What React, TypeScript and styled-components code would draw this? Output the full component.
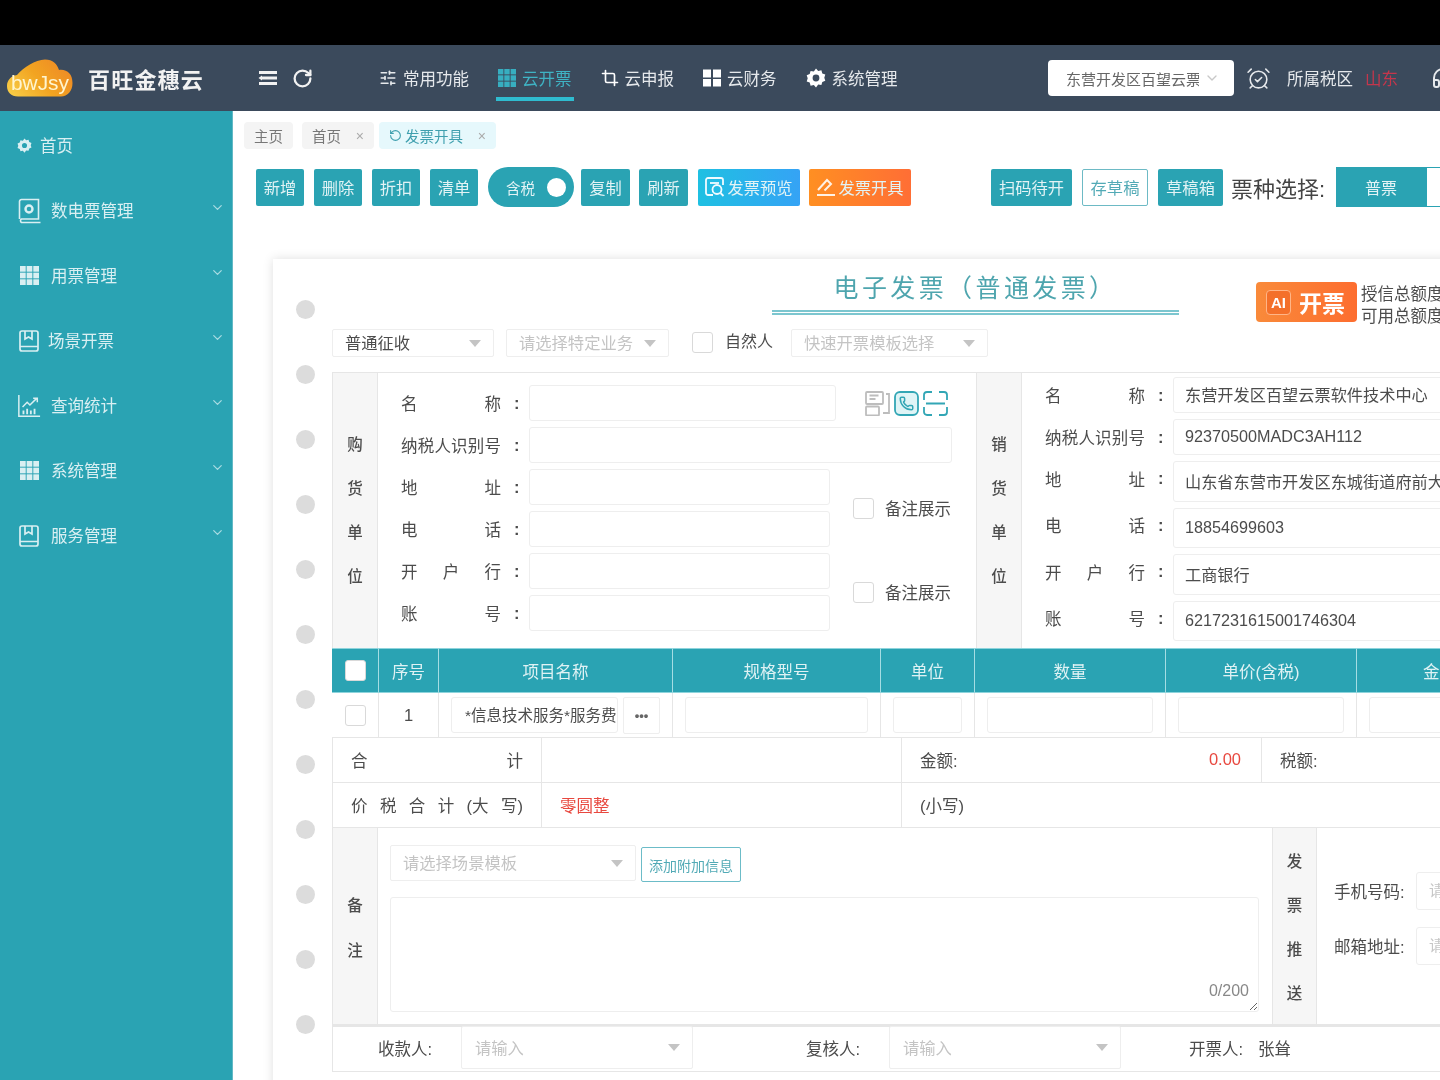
import styled, { createGlobalStyle } from "styled-components"
import { AlarmClockCheck, ChevronDown, Crop, Headphones, Phone, RotateCcw, RotateCw, SlidersHorizontal } from "lucide-react"

const teal = "#2aa3b3"
const line = "#e6e6e6"

const GlobalStyle = createGlobalStyle`
  html, body {
    margin: 0;
    height: 100%;
    overflow: hidden;
    background: #000;
  }
  * {
    box-sizing: border-box;
  }
  body, input, textarea {
    font-family: "Liberation Sans", "Noto Sans CJK SC", sans-serif;
  }
`

const Page = styled.div`
  width: 1440px;
  height: 1080px;
  padding-top: 45px;
  overflow: hidden;
  background: #000;
  filter: blur(0.35px);
`

const Header = styled.header`
  height: 66px;
  display: flex;
  align-items: center;
  background: #3b4a5c;
  color: #ececec;
  white-space: nowrap;
`
const LogoBox = styled.div`
  width: 88px;
  padding-left: 7px;
  display: flex;
  flex: none;
`
const Brand = styled.div`
  width: 170px;
  flex: none;
  font-size: 22px;
  font-weight: 700;
  letter-spacing: 1.2px;
  color: #f2f2f2;
`
const HeaderTool = styled.span`
  display: flex;
  margin-right: 14px;
  color: #f2f2f2;
`
const Nav = styled.nav`
  display: flex;
  margin-left: 50px;
  width: 671px;
  flex: none;
  height: 100%;
`
const NavItem = styled.div<{ $active?: boolean }>`
  height: 100%;
  margin-right: 25px;
  padding: 0 2px;
  display: flex;
  align-items: center;
  gap: 6px;
  font-size: 16.5px;
  color: ${(p) => (p.$active ? "#3fb3c4" : "#e6e9ec")};
  box-shadow: ${(p) => (p.$active ? "inset 0 -10px 0 #3b4a5c, inset 0 -14px 0 #2fbcd0" : "none")};
`
const CompanySelect = styled.div`
  width: 186px;
  height: 36px;
  flex: none;
  padding: 0 14px 0 18px;
  display: flex;
  align-items: center;
  justify-content: space-between;
  background: #fff;
  border-radius: 4px;
  color: #666;
  font-size: 15px;
`
const CompanyName = styled.span`
  width: 133px;
  overflow: hidden;
`
const TaxArea = styled.div`
  margin-left: 12px;
  display: flex;
  align-items: center;
  font-size: 16.5px;
  flex: none;
`
const TaxLabel = styled.span`
  margin-left: 16px;
  color: #e6e9ec;
`
const TaxValue = styled.span`
  margin-left: 12px;
  color: #c4364c;
`
const HeadsetSlot = styled.span`
  display: flex;
  margin-left: 33px;
  color: #e6e9ec;
`

const Body = styled.div`
  height: 969px;
  display: flex;
`
const Sidebar = styled.aside`
  width: 233px;
  flex: none;
  padding-top: 2px;
  background: ${teal};
  border-right: 1px solid #62b9c5;
  color: #d9eff2;
  font-size: 16.5px;
`
const SideItem = styled.div<{ $gap?: number }>`
  height: 65px;
  padding: 0 7px 0 17px;
  display: flex;
  align-items: center;
  gap: ${(p) => p.$gap ?? 10}px;
`
const SideIcon = styled.span`
  width: 24px;
  display: flex;
  justify-content: center;
  flex: none;
`
const SideText = styled.span`
  flex: 1;
  margin-top: -1px;
`
const SideChevron = styled.span`
  display: flex;
  margin-top: -7px;
  color: #a9dbe2;
`

const Main = styled.main`
  flex: 1;
  min-width: 0;
  overflow: hidden;
  background: #fff;
`
const Tabs = styled.div`
  height: 27px;
  margin: 11px 0 0 11px;
  display: flex;
  gap: 9px;
  font-size: 14.5px;
  white-space: nowrap;
`
const Tab = styled.div<{ $active?: boolean; $w: number }>`
  width: ${(p) => p.$w}px;
  margin-left: ${(p) => (p.$active ? -4 : 0)}px;
  display: flex;
  align-items: center;
  justify-content: space-between;
  padding: 0 10px;
  border-radius: 4px;
  background: ${(p) => (p.$active ? "#e6f8fc" : "#f4f4f4")};
  color: ${(p) => (p.$active ? "#3f9fae" : "#777")};
`
const TabClose = styled.span`
  color: #aaa;
  font-size: 14px;
`
const TabLabel = styled.span`
  display: flex;
  align-items: center;
  gap: 3px;
`
const Toolbar = styled.div`
  height: 40px;
  margin: 18px 0 0 23px;
  display: flex;
  align-items: center;
  gap: 10px;
  white-space: nowrap;
`
const Btn = styled.div<{ $w: number; $kind?: "blue" | "orange" | "line"; $gapLeft?: number }>`
  width: ${(p) => p.$w}px;
  height: 37px;
  flex: none;
  margin-left: ${(p) => p.$gapLeft ?? 0}px;
  display: flex;
  align-items: center;
  justify-content: center;
  gap: 2px;
  border-radius: 2px;
  font-size: 16.3px;
  color: ${(p) => (p.$kind === "line" ? "#52aab6" : "#e2f3f5")};
  border: ${(p) => (p.$kind === "line" ? "1px solid #6dbac5" : "none")};
  background: ${(p) =>
    p.$kind === "blue"
      ? "linear-gradient(90deg, #1fc0e2, #35a3f5)"
      : p.$kind === "orange"
        ? "linear-gradient(90deg, #ff8f22, #ff6e35)"
        : p.$kind === "line"
          ? "#fff"
          : teal};
`
const TaxToggle = styled.div`
  width: 86px;
  height: 40px;
  flex: none;
  padding: 0 7px 0 18px;
  display: flex;
  align-items: center;
  justify-content: space-between;
  border-radius: 20px;
  background: ${teal};
  color: #e2f3f5;
  font-size: 14.5px;
`
const ToggleKnob = styled.span`
  width: 19px;
  height: 19px;
  margin-right: 1px;
  border-radius: 50%;
  background: #fff;
`
const KindLabel = styled.span`
  margin-left: -2px;
  width: 95px;
  flex: none;
  font-size: 22px;
  color: #444;
`
const KindOn = styled.div`
  width: 90px;
  height: 40px;
  flex: none;
  display: flex;
  align-items: center;
  justify-content: center;
  background: ${teal};
  color: #e2f3f5;
  font-size: 16px;
`
const KindOff = styled.div`
  width: 90px;
  height: 40px;
  flex: none;
  margin-left: -10px;
  background: #fff;
  border: 1px solid ${teal};
`

const Sheet = styled.section`
  width: 1300px;
  margin: 52px 0 0 40px;
  padding-bottom: 40px;
  display: flex;
  background: #fff;
  box-shadow: 0 0 10px rgba(0, 0, 0, 0.13);
`
const Holes = styled.div`
  width: 59px;
  flex: none;
  padding: 41px 0 0 23px;
  display: flex;
  flex-direction: column;
  gap: 46px;
`
const Hole = styled.span`
  width: 19px;
  height: 19px;
  border-radius: 50%;
  background: #dcdcdc;
`
const Paper = styled.div`
  width: 1220px;
  flex: none;
  color: #4c4c4c;
  font-size: 16.5px;
`
const TitleRow = styled.div`
  height: 70px;
  display: flex;
`
const TitleBlock = styled.div`
  width: 407px;
  margin-left: 440px;
  flex: none;
`
const Title = styled.h1`
  margin: 6px 0 0;
  height: 45px;
  text-align: center;
  font-family: "Noto Sans CJK SC", sans-serif;
  font-size: 25px;
  line-height: 42px;
  font-weight: 400;
  letter-spacing: 3.4px;
  color: #4ea5ae;
`
const TitleRule = styled.div`
  height: 5px;
  border-top: 2px solid #7cc6cf;
  border-bottom: 2px solid #7cc6cf;
`
const AiButton = styled.div`
  width: 101px;
  height: 40px;
  margin: 23px 0 0 77px;
  flex: none;
  padding: 0 0 0 10px;
  display: flex;
  align-items: center;
  gap: 8px;
  border-radius: 4px;
  background: linear-gradient(90deg, #f98a3a, #fd6d2f);
  color: #fff;
  font-size: 23px;
  font-weight: 700;
`
const AiMark = styled.span`
  width: 25px;
  height: 25px;
  display: flex;
  align-items: center;
  justify-content: center;
  border-radius: 4px;
  border: 1px solid #ffb587;
  background: #f4702a;
  font-size: 15px;
  font-weight: 700;
`
const Credit = styled.div`
  margin: 24px 0 0 4px;
  font-size: 16.5px;
  line-height: 22px;
  color: #4c4c4c;
  white-space: nowrap;
`
const FilterRow = styled.div`
  height: 43px;
  display: flex;
  align-items: flex-start;
`
const Select = styled.div<{ $w: number; $h?: number; $muted?: boolean; $left?: number }>`
  width: ${(p) => p.$w}px;
  height: ${(p) => p.$h ?? 28}px;
  margin-left: ${(p) => p.$left ?? 0}px;
  flex: none;
  padding: 0 12px;
  display: flex;
  align-items: center;
  justify-content: space-between;
  border: 1px solid #eee;
  border-radius: 2px;
  background: #fff;
  font-size: 16.3px;
  line-height: 24px;
  color: ${(p) => (p.$muted ? "#c4c4c4" : "#4c4c4c")};
  &::after {
    content: "";
    border-style: solid;
    border-width: 7px 6px 0;
    border-color: #c4c4c4 transparent transparent;
  }
`
const Check = styled.span<{ $left?: number; $top?: number }>`
  width: 21px;
  height: 21px;
  margin-left: ${(p) => p.$left ?? 0}px;
  margin-top: ${(p) => p.$top ?? 0}px;
  flex: none;
  display: block;
  background: #fff;
  border: 1px solid #d9d9d9;
  border-radius: 3px;
`
const CheckText = styled.span`
  margin: 0 18px 0 12px;
  font-size: 16px;
  line-height: 26px;
`
const PartyBlock = styled.div`
  height: 276px;
  display: grid;
  grid-template-columns: 45px 598px 46px 1fr;
  border: 1px solid ${line};
  border-bottom: none;
`
const VerticalLabel = styled.div<{ $gap?: number; $divide?: boolean; $shift?: number }>`
  padding-top: ${(p) => p.$shift ?? 0}px;
  display: flex;
  flex-direction: column;
  align-items: center;
  justify-content: center;
  gap: ${(p) => p.$gap ?? 20}px;
  background: #f6f6f6;
  border-right: 1px solid ${line};
  border-left: ${(p) => (p.$divide ? `1px solid ${line}` : "none")};
  font-size: 15.5px;
  line-height: 24px;
  font-weight: 500;
`
const BuyerGrid = styled.div`
  padding-top: 12px;
  display: grid;
  grid-template-columns: 151px 301px 6px 116px;
  grid-auto-rows: 36px;
  row-gap: 6px;
`
const SellerGrid = styled.div`
  padding-top: 4px;
  display: grid;
  grid-template-columns: 151px 320px;
  grid-template-rows: 36px 36px 41px 40px 41px 40px;
  row-gap: 6px;
`
const FieldLabel = styled.div<{ $lift?: boolean }>`
  padding-left: 23px;
  display: flex;
  align-items: center;
  margin-bottom: ${(p) => (p.$lift ? 6 : 0)}px;
`
const LabelChars = styled.span`
  width: 100px;
  display: flex;
  justify-content: space-between;
`
const Colon = styled.span`
  margin-left: 13px;
  font-weight: 700;
`
const Input = styled.input<{ $span?: number }>`
  width: 100%;
  min-width: 0;
  grid-column: span ${(p) => p.$span ?? 1};
  padding: 0 11px 2px;
  border: 1px solid #eee;
  border-radius: 3px;
  outline: none;
  background: #fff;
  color: #4c4c4c;
  font-size: 16.2px;
  &::placeholder {
    color: #c6c6c6;
  }
`
const LookupIcons = styled.div`
  padding-left: 29px;
  display: flex;
  align-items: center;
  gap: 4px;
`
const NoteToggle = styled.div`
  grid-column: 3 / span 2;
  grid-row: span 2;
  margin-left: 23px;
  display: flex;
  align-items: center;
  gap: 11px;
  font-size: 16.5px;
  white-space: nowrap;
`
const Table = styled.div`
  display: grid;
  grid-template-columns: 47px 60px 234px 208px 94px 191px 191px 166px;
`
const HeadCell = styled.div`
  height: 45px;
  display: flex;
  align-items: center;
  justify-content: center;
  background: ${teal};
  border-top: 1px solid #8ed4dc;
  border-bottom: 1px solid #8ed4dc;
  border-right: 1px solid #a5dde3;
  color: #dff2f4;
  font-size: 16.5px;
  white-space: nowrap;
`
const Cell = styled.div`
  height: 45px;
  padding: 4px 12px;
  display: flex;
  align-items: center;
  justify-content: center;
  gap: 5px;
  border-right: 1px solid ${line};
  border-bottom: 1px solid ${line};
  &:first-child {
    border-left: 1px solid ${line};
  }
`
const CellInput = styled(Input)`
  height: 36px;
  flex: 1;
  font-size: 15.5px;
  padding: 0 0 2px 13px;
`
const MoreButton = styled.span`
  width: 37px;
  height: 37px;
  flex: none;
  display: flex;
  align-items: center;
  justify-content: center;
  border: 1px solid #eee;
  border-radius: 2px;
  font-weight: 700;
  color: #666;
  font-size: 13px;
`
const SumRow = styled.div<{ $cols: string }>`
  height: 45px;
  display: grid;
  grid-template-columns: ${(p) => p.$cols};
  border: 1px solid ${line};
  border-top: none;
  font-size: 16.5px;
`
const SumCell = styled.div<{ $spread?: boolean }>`
  padding: 0 18px 1px;
  display: flex;
  align-items: center;
  justify-content: ${(p) => (p.$spread ? "space-between" : "flex-start")};
  border-right: 1px solid ${line};
  color: #4c4c4c;
`
const Red = styled.span`
  color: #e8483f;
`
const Amount = styled(Red)`
  margin-right: 2px;
`
const RemarkBlock = styled.div`
  height: 197px;
  display: grid;
  grid-template-columns: 45px 894px 45px 1fr;
  border: 1px solid ${line};
  border-top: none;
`
const RemarkMain = styled.div`
  padding: 17px 12px 0 12px;
`
const RemarkTop = styled.div`
  display: flex;
  align-items: flex-start;
  gap: 5px;
`
const AttachButton = styled.div`
  width: 100px;
  height: 35px;
  margin-top: 2px;
  display: flex;
  align-items: center;
  justify-content: center;
  border: 1px solid #6cbcc8;
  border-radius: 2px;
  color: #52aab6;
  font-size: 14px;
`
const NoteArea = styled.div`
  position: relative;
  margin-top: 15px;
  height: 115px;
`
const NoteInput = styled.textarea`
  display: block;
  width: 869px;
  height: 115px;
  border: 1px solid #eee;
  border-radius: 3px;
  outline: none;
`
const Counter = styled.span`
  position: absolute;
  right: 11px;
  bottom: 12px;
  color: #888;
  font-size: 16px;
`
const PushForm = styled.div`
  padding: 44px 0 0 17px;
  display: flex;
  flex-direction: column;
  gap: 17px;
`
const PushRow = styled.div`
  display: flex;
  align-items: center;
  gap: 10px;
  font-size: 16.5px;
`
const PushLabel = styled.span`
  width: 72px;
  flex: none;
  white-space: nowrap;
`
const PushInput = styled(Input)`
  width: 300px;
  height: 38px;
  flex: none;
  font-size: 15px;
  padding-left: 12px;
`
const SignRow = styled.div`
  height: 47px;
  padding: 0 0 3px 45px;
  display: flex;
  align-items: center;
  border: 1px solid ${line};
  border-top: 2px solid ${line};
  font-size: 16.5px;
`
const SignLabel = styled.span<{ $left?: number; $w?: number }>`
  width: ${(p) => p.$w ?? 83}px;
  margin-left: ${(p) => p.$left ?? 0}px;
  flex: none;
`
const SignSelect = styled(Select)`
  padding-left: 13px;
`
const PhoneBadge = styled.span`
  position: relative;
  display: flex;
  & > svg:last-child {
    position: absolute;
    left: 5px;
    top: 5px;
  }
`

const MenuFold = () => (
  <svg width="20" height="20" viewBox="0 0 20 20" fill="#f2f2f2">
    <rect x="1" y="3" width="18" height="3" />
    <rect x="4" y="8.5" width="15" height="3" />
    <rect x="1" y="14" width="18" height="3" />
    <path d="M0.5 10 4 7.5v5z" />
  </svg>
)

const GridSquares = ({ size = 18, color = "currentColor" }: { size?: number; color?: string }) => (
  <svg width={size} height={size} viewBox="0 0 18 18" fill={color}>
    {[0, 6.3, 12.6].map((y) =>
      [0, 6.3, 12.6].map((x) => <rect key={`${x}-${y}`} x={x} y={y} width="5.4" height="5.4" />),
    )}
  </svg>
)

const FourSquares = () => (
  <svg width="18" height="18" viewBox="0 0 18 18" fill="#fff">
    <rect width="8" height="8" x="0" y="0.5" />
    <rect width="8" height="8" x="10" y="0.5" />
    <rect width="8" height="7.5" x="0" y="10" />
    <rect width="8" height="7.5" x="10" y="10" />
  </svg>
)

const Gear = ({ size = 20, color = "#fff" }: { size?: number; color?: string }) => (
  <svg width={size} height={size} viewBox="0 0 20 20">
    <path
      fill={color}
      fillRule="evenodd"
      d="M10 0.5l2.2 2.4 3.2-.6.9 3.1 3 1.2-1 3.1 1 3.1-3 1.2-.9 3.1-3.2-.6L10 19.5l-2.2-2.4-3.2.6-.9-3.1-3-1.2 1-3.1-1-3.1 3-1.2.9-3.1 3.2.6zM10 6.6a3.4 3.4 0 1 0 0 6.8 3.4 3.4 0 0 0 0-6.8z"
    />
  </svg>
)

const BookGear = () => (
  <svg width="24" height="26" viewBox="0 0 24 26" fill="none" stroke="#d9eff2" strokeWidth="1.6">
    <path d="M2.500 21V3.500a2 2 0 0 1 2-2h17v19.500H4.500a2 2 0 0 0 0 3.500H23.500" />
    <circle cx="12" cy="11" r="3.500" strokeWidth="2.400" />
  </svg>
)

const BookMark = () => (
  <svg width="22" height="24" viewBox="0 0 22 24" fill="none" stroke="#d9eff2" strokeWidth="1.7">
    <rect x="2" y="2" width="18" height="20" rx="2" />
    <path d="M2 17.500h18M7 2v8l3.500-2 3.500 2V2" />
  </svg>
)

const ChartIcon = () => (
  <svg width="26" height="26" viewBox="0 0 26 26" fill="none" stroke="#d9eff2" strokeWidth="1.6">
    <path d="M2 1v23h23" />
    <path d="M6 14l5-5 3 3 7-7M17.500 4.500H22V9" />
    <path d="M7 22v-4M11 22v-6M15 22v-4M19 22v-6" strokeWidth="2" />
  </svg>
)

const PreviewIcon = () => (
  <svg width="20" height="20" viewBox="0 0 20 20" fill="none" stroke="#f0fbff" strokeWidth="1.8">
    <path d="M8 18H3a2 2 0 0 1-2-2V3a2 2 0 0 1 2-2h13a2 2 0 0 1 2 2v5" />
    <path d="M5 6h9" />
    <circle cx="12" cy="12.500" r="4.500" />
    <path d="M15.500 16l3 3" />
  </svg>
)

const PenIcon = () => (
  <svg width="20" height="20" viewBox="0 0 20 20" fill="none" stroke="#fff1e4" strokeWidth="2">
    <path d="M2 13L11 3l4 4-6.500 6.500" />
    <path d="M1 18h18" />
  </svg>
)

const InvoiceLookup = () => (
  <svg width="25" height="25" viewBox="0 0 25 25" fill="none" stroke="#bdbdbd" strokeWidth="1.800">
    <rect x="1" y="1" width="17" height="12" rx="1" />
    <rect x="1" y="15.500" width="13" height="9" rx="1" />
    <path d="M4.500 4.500h9M4.500 8h6M21 3h3v19h-6" />
  </svg>
)

const PhoneLookup = () => (
  <svg width="25" height="25" viewBox="0 0 25 25" fill="none">
    <rect x="1" y="1" width="23" height="23" rx="5" stroke="#32a6b5" strokeWidth="1.800" fill="#dff4f6" />
  </svg>
)

const ScanLookup = () => (
  <svg width="25" height="25" viewBox="0 0 25 25" fill="none" stroke="#32a6b5" strokeWidth="1.800">
    <path d="M1 9V4a3 3 0 0 1 3-3h5M16 1h5a3 3 0 0 1 3 3v5M24 16v5a3 3 0 0 1-3 3h-5M9 24H4a3 3 0 0 1-3-3v-5M3 12.500h19" />
  </svg>
)

const Logo = () => (
  <svg width="66" height="38" viewBox="0 0 66 38">
    <defs>
      <linearGradient id="cloud" x1="0" y1="0.8" x2="1" y2="0.3">
        <stop offset="0" stopColor="#f7cb45" />
        <stop offset="0.5" stopColor="#f2a421" />
        <stop offset="1" stopColor="#ee8a25" />
      </linearGradient>
    </defs>
    <path
      fill="url(#cloud)"
      d="M11 37.500C4 37.500 0 33 0 27c0-6 4-10 10-11C17 8 28 1 38 0.500 46 0.500 50 5 52 11c8-1 13.500 4 13.500 13 0 8-5 13.500-11.500 13.500z"
    />
    <text
      x="4"
      y="31"
      fontSize="20"
      fontFamily="Liberation Sans, sans-serif"
      fill="#fff5cf"
      textLength="58"
      lengthAdjust="spacingAndGlyphs"
    >
      bwJsy
    </text>
  </svg>
)

const sideMenu = [
  { label: "数电票管理", icon: <BookGear /> },
  { label: "用票管理", icon: <GridSquares size={19} color="#d9eff2" /> },
  { label: "场景开票", icon: <BookMark />, gap: 7 },
  { label: "查询统计", icon: <ChartIcon /> },
  { label: "系统管理", icon: <GridSquares size={19} color="#d9eff2" /> },
  { label: "服务管理", icon: <BookMark /> },
]

const holes = Array.from({ length: 13 })

const Spread = ({ chars }: { chars: string[] }) => (
  <>
    <LabelChars>
      {chars.map((c, i) => (
        <span key={i}>{c}</span>
      ))}
    </LabelChars>
    <Colon>:</Colon>
  </>
)

const taxIdChars = ["纳", "税", "人", "识", "别", "号"]
const partyLabels = [["名", "称"], taxIdChars, ["地", "址"], ["电", "话"], ["开", "户", "行"], ["账", "号"]]

const sellerValues = [
  "东营开发区百望云票软件技术中心",
  "92370500MADC3AH112",
  "山东省东营市开发区东城街道府前大街",
  "18854699603",
  "工商银行",
  "6217231615001746304",
]

const headCols = ["序号", "项目名称", "规格型号", "单位", "数量", "单价(含税)", "金额"]

function FieldRow({ chars, value, lift }: { chars: string[]; value: string; lift: boolean }) {
  return (
    <>
      <FieldLabel $lift={lift}>
        <Spread chars={chars} />
      </FieldLabel>
      <Input readOnly defaultValue={value} />
    </>
  )
}

export default function App() {
  return (
    <Page>
      <GlobalStyle />
      <Header>
        <LogoBox>
          <Logo />
        </LogoBox>
        <Brand>百旺金穗云</Brand>
        <HeaderTool>
          <MenuFold />
        </HeaderTool>
        <HeaderTool>
          <RotateCw size={21} strokeWidth={2.6} />
        </HeaderTool>
        <Nav>
          <NavItem>
            <SlidersHorizontal size={18} strokeWidth={2.2} />
            常用功能
          </NavItem>
          <NavItem $active>
            <GridSquares size={18} color="#37aec0" />
            云开票
          </NavItem>
          <NavItem>
            <Crop size={18} strokeWidth={2.2} color="#fff" />
            云申报
          </NavItem>
          <NavItem>
            <FourSquares />
            云财务
          </NavItem>
          <NavItem>
            <Gear />
            系统管理
          </NavItem>
        </Nav>
        <CompanySelect>
          <CompanyName>东营开发区百望云票</CompanyName>
          <ChevronDown size={16} color="#c8c8c8" />
        </CompanySelect>
        <TaxArea>
          <AlarmClockCheck size={25} strokeWidth={1.5} color="#e6e9ec" />
          <TaxLabel>所属税区</TaxLabel>
          <TaxValue>山东</TaxValue>
          <HeadsetSlot>
            <Headphones size={24} strokeWidth={2} />
          </HeadsetSlot>
        </TaxArea>
      </Header>
      <Body>
        <Sidebar>
          <SideItem $gap={8}>
            <Gear size={15} color="#d9eff2" />
            <SideText>首页</SideText>
          </SideItem>
          {sideMenu.map((m) => (
            <SideItem key={m.label} $gap={m.gap}>
              <SideIcon>{m.icon}</SideIcon>
              <SideText>{m.label}</SideText>
              <SideChevron>
                <ChevronDown size={15} />
              </SideChevron>
            </SideItem>
          ))}
        </Sidebar>
        <Main>
          <Tabs>
            <Tab $w={49}>主页</Tab>
            <Tab $w={72}>
              首页
              <TabClose>×</TabClose>
            </Tab>
            <Tab $w={117} $active>
              <TabLabel>
                <RotateCcw size={13} />
                发票开具
              </TabLabel>
              <TabClose>×</TabClose>
            </Tab>
          </Tabs>
          <Toolbar>
            <Btn $w={48}>新增</Btn>
            <Btn $w={48}>删除</Btn>
            <Btn $w={48}>折扣</Btn>
            <Btn $w={48}>清单</Btn>
            <TaxToggle>
              含税
              <ToggleKnob />
            </TaxToggle>
            <Btn $w={49} $gapLeft={-3}>复制</Btn>
            <Btn $w={49} $gapLeft={-1}>刷新</Btn>
            <Btn $w={102} $kind="blue">
              <PreviewIcon />
              发票预览
            </Btn>
            <Btn $w={102} $kind="orange" $gapLeft={-1}>
              <PenIcon />
              发票开具
            </Btn>
            <Btn $w={81} $gapLeft={70}>扫码待开</Btn>
            <Btn $w={66} $kind="line">存草稿</Btn>
            <Btn $w={65}>草稿箱</Btn>
            <KindLabel>票种选择:</KindLabel>
            <KindOn>普票</KindOn>
            <KindOff />
          </Toolbar>
          <Sheet>
            <Holes>
              {holes.map((_, i) => (
                <Hole key={i} />
              ))}
            </Holes>
            <Paper>
              <TitleRow>
                <TitleBlock>
                  <Title>{"电子发票\uFF08普通发票\uFF09"}</Title>
                  <TitleRule />
                </TitleBlock>
                <AiButton>
                  <AiMark>AI</AiMark>
                  开票
                </AiButton>
                <Credit>
                  授信总额度
                  <br />
                  可用总额度
                </Credit>
              </TitleRow>
              <FilterRow>
                <Select $w={162}>普通征收</Select>
                <Select $w={163} $left={12} $muted>
                  请选择特定业务
                </Select>
                <Check $left={23} $top={3} />
                <CheckText>自然人</CheckText>
                <Select $w={197} $muted>
                  快速开票模板选择
                </Select>
              </FilterRow>
              <PartyBlock>
                <VerticalLabel>
                  <span>购</span>
                  <span>货</span>
                  <span>单</span>
                  <span>位</span>
                </VerticalLabel>
                <BuyerGrid>
                  <FieldLabel>
                    <Spread chars={partyLabels[0]} />
                  </FieldLabel>
                  <Input $span={2} />
                  <LookupIcons>
                    <InvoiceLookup />
                    <PhoneBadge>
                      <PhoneLookup />
                      <Phone size={15} color="#32a6b5" strokeWidth={2.4} />
                    </PhoneBadge>
                    <ScanLookup />
                  </LookupIcons>
                  <FieldLabel>
                    <Spread chars={taxIdChars} />
                  </FieldLabel>
                  <Input $span={3} />
                  <FieldLabel>
                    <Spread chars={partyLabels[2]} />
                  </FieldLabel>
                  <Input />
                  <NoteToggle>
                    <Check />
                    备注展示
                  </NoteToggle>
                  <FieldLabel>
                    <Spread chars={partyLabels[3]} />
                  </FieldLabel>
                  <Input />
                  <FieldLabel>
                    <Spread chars={partyLabels[4]} />
                  </FieldLabel>
                  <Input />
                  <NoteToggle>
                    <Check />
                    备注展示
                  </NoteToggle>
                  <FieldLabel>
                    <Spread chars={partyLabels[5]} />
                  </FieldLabel>
                  <Input />
                </BuyerGrid>
                <VerticalLabel $divide>
                  <span>销</span>
                  <span>货</span>
                  <span>单</span>
                  <span>位</span>
                </VerticalLabel>
                <SellerGrid>
                  {partyLabels.map((chars, i) => (
                    <FieldRow key={i} chars={chars} value={sellerValues[i]} lift={i > 1} />
                  ))}
                </SellerGrid>
              </PartyBlock>
              <Table>
                <HeadCell>
                  <Check />
                </HeadCell>
                {headCols.map((h) => (
                  <HeadCell key={h}>{h}</HeadCell>
                ))}
                <Cell>
                  <Check />
                </Cell>
                <Cell>1</Cell>
                <Cell>
                  <CellInput readOnly defaultValue="*信息技术服务*服务费" />
                  <MoreButton>•••</MoreButton>
                </Cell>
                <Cell>
                  <CellInput readOnly />
                </Cell>
                <Cell>
                  <CellInput readOnly />
                </Cell>
                <Cell>
                  <CellInput readOnly />
                </Cell>
                <Cell>
                  <CellInput readOnly />
                </Cell>
                <Cell>
                  <CellInput readOnly />
                </Cell>
              </Table>
              <SumRow $cols="209px 360px 360px 1fr">
                <SumCell $spread>
                  <span>合</span>
                  <span>计</span>
                </SumCell>
                <SumCell />
                <SumCell $spread>
                  <span>金额:</span>
                  <Amount>0.00</Amount>
                </SumCell>
                <SumCell>税额:</SumCell>
              </SumRow>
              <SumRow $cols="209px 360px 1fr">
                <SumCell $spread>
                  {["价", "税", "合", "计", "(大", "写)"].map((c) => (
                    <span key={c}>{c}</span>
                  ))}
                </SumCell>
                <SumCell>
                  <Red>零圆整</Red>
                </SumCell>
                <SumCell>(小写)</SumCell>
              </SumRow>
              <RemarkBlock>
                <VerticalLabel $gap={21} $shift={4}>
                  <span>备</span>
                  <span>注</span>
                </VerticalLabel>
                <RemarkMain>
                  <RemarkTop>
                    <Select $w={246} $h={36} $muted>
                      请选择场景模板
                    </Select>
                    <AttachButton>添加附加信息</AttachButton>
                  </RemarkTop>
                  <NoteArea>
                    <NoteInput />
                    <Counter>0/200</Counter>
                  </NoteArea>
                </RemarkMain>
                <VerticalLabel $divide $shift={4}>
                  <span>发</span>
                  <span>票</span>
                  <span>推</span>
                  <span>送</span>
                </VerticalLabel>
                <PushForm>
                  <PushRow>
                    <PushLabel>手机号码:</PushLabel>
                    <PushInput placeholder="请输入手机号码" />
                  </PushRow>
                  <PushRow>
                    <PushLabel>邮箱地址:</PushLabel>
                    <PushInput placeholder="请输入邮箱地址" />
                  </PushRow>
                </PushForm>
              </RemarkBlock>
              <SignRow>
                <SignLabel>收款人:</SignLabel>
                <SignSelect $w={232} $h={43} $muted>
                  请输入
                </SignSelect>
                <SignLabel $left={113}>复核人:</SignLabel>
                <SignSelect $w={232} $h={43} $muted>
                  请输入
                </SignSelect>
                <SignLabel $left={68} $w={69}>
                  开票人:
                </SignLabel>
                <span>张耸</span>
              </SignRow>
            </Paper>
          </Sheet>
        </Main>
      </Body>
    </Page>
  )
}
